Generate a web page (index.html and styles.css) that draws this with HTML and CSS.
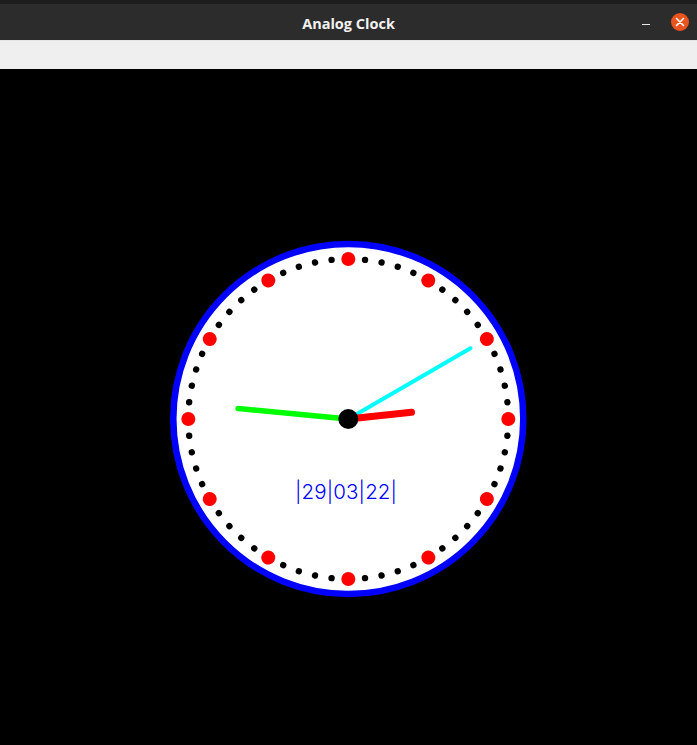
FILE: index.html
```html
<!DOCTYPE html>
<html>
<head>
<meta charset="utf-8">
<title>Analog Clock</title>
<link rel="stylesheet" href="styles.css">
</head>
<body>
<div class="window">
  <header class="titlebar">
    <div class="spacer"></div>
    <div class="title">Analog Clock</div>
    <div class="controls">
      <span class="min"></span>
      <span class="close">
        <svg width="10" height="10" viewBox="0 0 10 10"><path d="M1.5 1.5 L8.5 8.5 M8.5 1.5 L1.5 8.5" stroke="#fff" stroke-width="1.6" stroke-linecap="round"/></svg>
      </span>
    </div>
  </header>
  <div class="toolbar"></div>
  <main class="canvas">
    <svg class="clock" width="697" height="676" viewBox="0 0 697 676">
      <circle cx="348.3" cy="350" r="175" fill="#fff" stroke="#0000ff" stroke-width="6.5"/>
      <g fill="#000">
        <circle cx="348.3" cy="190" r="3.2" transform="rotate(6 348.3 350)"/>
        <circle cx="348.3" cy="190" r="3.2" transform="rotate(12 348.3 350)"/>
        <circle cx="348.3" cy="190" r="3.2" transform="rotate(18 348.3 350)"/>
        <circle cx="348.3" cy="190" r="3.2" transform="rotate(24 348.3 350)"/>
        <circle cx="348.3" cy="190" r="3.2" transform="rotate(36 348.3 350)"/>
        <circle cx="348.3" cy="190" r="3.2" transform="rotate(42 348.3 350)"/>
        <circle cx="348.3" cy="190" r="3.2" transform="rotate(48 348.3 350)"/>
        <circle cx="348.3" cy="190" r="3.2" transform="rotate(54 348.3 350)"/>
        <circle cx="348.3" cy="190" r="3.2" transform="rotate(66 348.3 350)"/>
        <circle cx="348.3" cy="190" r="3.2" transform="rotate(72 348.3 350)"/>
        <circle cx="348.3" cy="190" r="3.2" transform="rotate(78 348.3 350)"/>
        <circle cx="348.3" cy="190" r="3.2" transform="rotate(84 348.3 350)"/>
        <circle cx="348.3" cy="190" r="3.2" transform="rotate(96 348.3 350)"/>
        <circle cx="348.3" cy="190" r="3.2" transform="rotate(102 348.3 350)"/>
        <circle cx="348.3" cy="190" r="3.2" transform="rotate(108 348.3 350)"/>
        <circle cx="348.3" cy="190" r="3.2" transform="rotate(114 348.3 350)"/>
        <circle cx="348.3" cy="190" r="3.2" transform="rotate(126 348.3 350)"/>
        <circle cx="348.3" cy="190" r="3.2" transform="rotate(132 348.3 350)"/>
        <circle cx="348.3" cy="190" r="3.2" transform="rotate(138 348.3 350)"/>
        <circle cx="348.3" cy="190" r="3.2" transform="rotate(144 348.3 350)"/>
        <circle cx="348.3" cy="190" r="3.2" transform="rotate(156 348.3 350)"/>
        <circle cx="348.3" cy="190" r="3.2" transform="rotate(162 348.3 350)"/>
        <circle cx="348.3" cy="190" r="3.2" transform="rotate(168 348.3 350)"/>
        <circle cx="348.3" cy="190" r="3.2" transform="rotate(174 348.3 350)"/>
        <circle cx="348.3" cy="190" r="3.2" transform="rotate(186 348.3 350)"/>
        <circle cx="348.3" cy="190" r="3.2" transform="rotate(192 348.3 350)"/>
        <circle cx="348.3" cy="190" r="3.2" transform="rotate(198 348.3 350)"/>
        <circle cx="348.3" cy="190" r="3.2" transform="rotate(204 348.3 350)"/>
        <circle cx="348.3" cy="190" r="3.2" transform="rotate(216 348.3 350)"/>
        <circle cx="348.3" cy="190" r="3.2" transform="rotate(222 348.3 350)"/>
        <circle cx="348.3" cy="190" r="3.2" transform="rotate(228 348.3 350)"/>
        <circle cx="348.3" cy="190" r="3.2" transform="rotate(234 348.3 350)"/>
        <circle cx="348.3" cy="190" r="3.2" transform="rotate(246 348.3 350)"/>
        <circle cx="348.3" cy="190" r="3.2" transform="rotate(252 348.3 350)"/>
        <circle cx="348.3" cy="190" r="3.2" transform="rotate(258 348.3 350)"/>
        <circle cx="348.3" cy="190" r="3.2" transform="rotate(264 348.3 350)"/>
        <circle cx="348.3" cy="190" r="3.2" transform="rotate(276 348.3 350)"/>
        <circle cx="348.3" cy="190" r="3.2" transform="rotate(282 348.3 350)"/>
        <circle cx="348.3" cy="190" r="3.2" transform="rotate(288 348.3 350)"/>
        <circle cx="348.3" cy="190" r="3.2" transform="rotate(294 348.3 350)"/>
        <circle cx="348.3" cy="190" r="3.2" transform="rotate(306 348.3 350)"/>
        <circle cx="348.3" cy="190" r="3.2" transform="rotate(312 348.3 350)"/>
        <circle cx="348.3" cy="190" r="3.2" transform="rotate(318 348.3 350)"/>
        <circle cx="348.3" cy="190" r="3.2" transform="rotate(324 348.3 350)"/>
        <circle cx="348.3" cy="190" r="3.2" transform="rotate(336 348.3 350)"/>
        <circle cx="348.3" cy="190" r="3.2" transform="rotate(342 348.3 350)"/>
        <circle cx="348.3" cy="190" r="3.2" transform="rotate(348 348.3 350)"/>
        <circle cx="348.3" cy="190" r="3.2" transform="rotate(354 348.3 350)"/>
      </g>
      <g fill="#ff0000">
        <circle cx="348.3" cy="190" r="7"/>
        <circle cx="348.3" cy="190" r="7" transform="rotate(30 348.3 350)"/>
        <circle cx="348.3" cy="190" r="7" transform="rotate(60 348.3 350)"/>
        <circle cx="348.3" cy="190" r="7" transform="rotate(90 348.3 350)"/>
        <circle cx="348.3" cy="190" r="7" transform="rotate(120 348.3 350)"/>
        <circle cx="348.3" cy="190" r="7" transform="rotate(150 348.3 350)"/>
        <circle cx="348.3" cy="190" r="7" transform="rotate(180 348.3 350)"/>
        <circle cx="348.3" cy="190" r="7" transform="rotate(210 348.3 350)"/>
        <circle cx="348.3" cy="190" r="7" transform="rotate(240 348.3 350)"/>
        <circle cx="348.3" cy="190" r="7" transform="rotate(270 348.3 350)"/>
        <circle cx="348.3" cy="190" r="7" transform="rotate(300 348.3 350)"/>
        <circle cx="348.3" cy="190" r="7" transform="rotate(330 348.3 350)"/>
      </g>
      <text class="date" x="295" y="430" textLength="102" lengthAdjust="spacing">|29|03|22|</text>
      <line x1="348.3" y1="350" x2="238" y2="339.5" stroke="#00ff00" stroke-width="5.5" stroke-linecap="round"/>
      <line x1="348.3" y1="350" x2="470.5" y2="279.3" stroke="#00ffff" stroke-width="4" stroke-linecap="round"/>
      <line x1="348.3" y1="350" x2="411.5" y2="343.3" stroke="#ff0000" stroke-width="7" stroke-linecap="round"/>
      <circle cx="348.3" cy="350" r="10" fill="#000"/>
    </svg>
  </main>
</div>
</body>
</html>
```

FILE: styles.css
```css
html, body {
  margin: 0;
  padding: 0;
  background: #000;
}

.window {
  display: flex;
  flex-direction: column;
  width: 697px;
  height: 745px;
  overflow: hidden;
}

.titlebar {
  height: 36px;
  border-top: 4px solid #1d1d1d;
  background: #2c2c2c;
  display: grid;
  grid-template-columns: 1fr auto 1fr;
  align-items: center;
}

.title {
  font-family: "Open Sans", "DejaVu Sans", sans-serif;
  font-weight: 700;
  font-size: 14.5px;
  color: #f2f2f2;
  padding-top: 2px;
}

.controls {
  justify-self: end;
  display: flex;
  align-items: center;
  gap: 21px;
  padding-right: 8px;
}

.min {
  display: block;
  width: 8px;
  height: 1.5px;
  background: #e8e8e8;
  margin-top: 5px;
}

.close {
  width: 18px;
  height: 18px;
  border-radius: 50%;
  background: #e95420;
  display: flex;
  align-items: center;
  justify-content: center;
}

.close svg {
  display: block;
}

.toolbar {
  height: 28px;
  background: #efefef;
  border-top: 1px solid #e4e4e4;
}

.canvas {
  flex: 1;
  background: #000;
}

.clock {
  display: block;
}

.date {
  font-family: Inter, "Liberation Sans", sans-serif;
  font-weight: 300;
  font-size: 20.5px;
  fill: #0000ff;
}
```
